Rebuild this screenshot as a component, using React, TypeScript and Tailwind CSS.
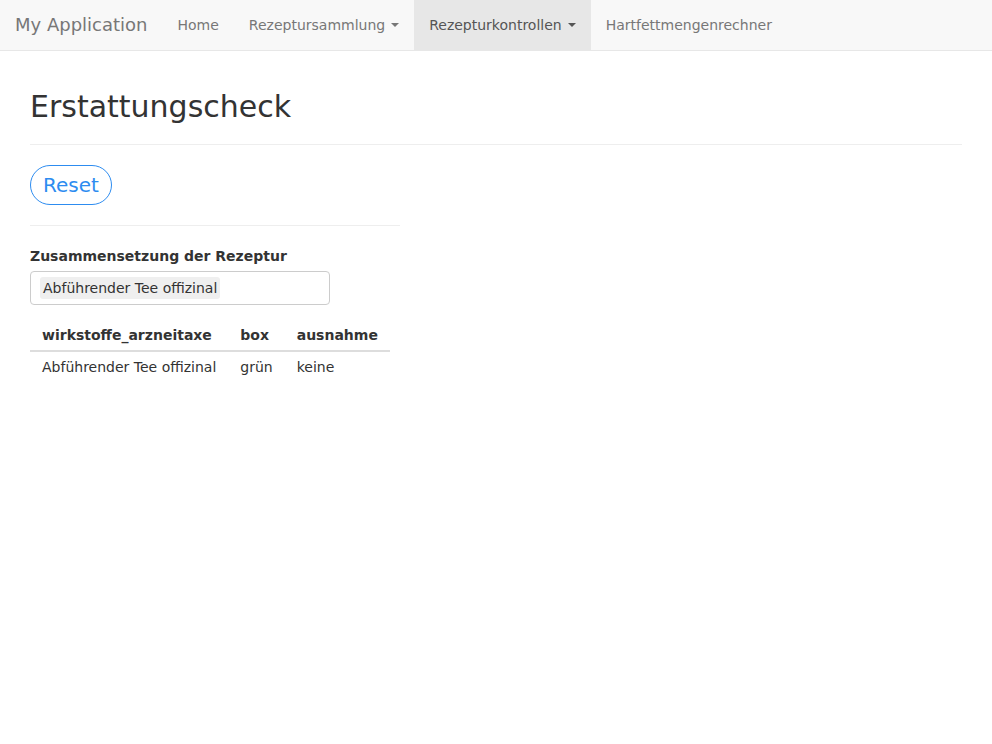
export default function App() {
  const font = { fontFamily: '"DejaVu Sans", sans-serif' };
  return (
    <div className="min-h-screen bg-white text-[14px] leading-[20px] text-[#333]" style={font}>
      <nav className="flex h-[51px] items-start border-b border-[#e7e7e7] bg-[#f8f8f8]">
        <a className="block px-[15px] py-[15px] text-[18px] leading-[20px] text-[#777]">My Application</a>
        <ul className="flex">
          <li className="px-[15px] py-[15px] text-[#777]">Home</li>
          <li className="flex items-center px-[15px] py-[15px] text-[#777]">
            Rezeptursammlung
            <span className="ml-[6px] inline-block h-0 w-0 border-x-[4px] border-t-[4px] border-x-transparent border-t-[#777]" />
          </li>
          <li className="flex items-center bg-[#e7e7e7] px-[15px] py-[15px] text-[#555]">
            Rezepturkontrollen
            <span className="ml-[6px] inline-block h-0 w-0 border-x-[4px] border-t-[4px] border-x-transparent border-t-[#555]" />
          </li>
          <li className="px-[15px] py-[15px] text-[#777]">Hartfettmengenrechner</li>
        </ul>
      </nav>
      <main className="px-[30px] pt-[39px]">
        <div className="border-b border-[#eee] pb-[21px]">
          <h2 className="text-[30px] font-normal leading-[33px] text-[#333]">Erstattungscheck</h2>
        </div>
        <div className="w-[370px]">
          <button className="mt-[20px] flex h-[40px] items-center rounded-full border border-[#2d8cf0] px-[12px] text-[20px] text-[#2d8cf0]">
            Reset
          </button>
          <div className="mt-[20px] border-t border-[#eee]" />
          <label className="mt-[20px] mb-[5px] block font-bold">Zusammensetzung der Rezeptur</label>
          <div className="flex h-[34px] w-[300px] items-center rounded-[4px] border border-[#ccc] px-[9px]">
            <span className="rounded-[3px] bg-[#efefef] px-[3px] leading-[22px] text-[#333]">Abführender Tee offizinal</span>
          </div>
          <table className="mt-[10px] border-collapse">
            <thead>
              <tr>
                <th className="border-b-2 border-[#ddd] px-[12px] pt-[10px] pb-[5px] text-left font-bold">wirkstoffe_arzneitaxe</th>
                <th className="border-b-2 border-[#ddd] px-[12px] pt-[10px] pb-[5px] text-left font-bold">box</th>
                <th className="border-b-2 border-[#ddd] px-[12px] pt-[10px] pb-[5px] text-left font-bold">ausnahme</th>
              </tr>
            </thead>
            <tbody>
              <tr>
                <td className="px-[12px] py-[5px]">Abführender Tee offizinal</td>
                <td className="px-[12px] py-[5px]">grün</td>
                <td className="px-[12px] py-[5px]">keine</td>
              </tr>
            </tbody>
          </table>
        </div>
      </main>
    </div>
  );
}
